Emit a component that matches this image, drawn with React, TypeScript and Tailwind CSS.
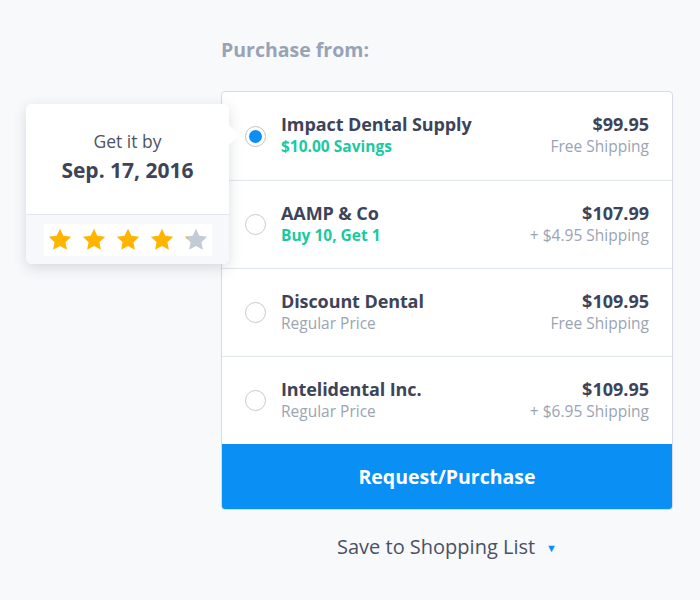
import React from "react";

type Row = { name: string; sub: string; subGreen: boolean; price: string; ship: string; selected?: boolean };

const rows: Row[] = [
  { name: "Impact Dental Supply", sub: "$10.00 Savings", subGreen: true, price: "$99.95", ship: "Free Shipping", selected: true },
  { name: "AAMP & Co", sub: "Buy 10, Get 1", subGreen: true, price: "$107.99", ship: "+ $4.95 Shipping" },
  { name: "Discount Dental", sub: "Regular Price", subGreen: false, price: "$109.95", ship: "Free Shipping" },
  { name: "Intelidental Inc.", sub: "Regular Price", subGreen: false, price: "$109.95", ship: "+ $6.95 Shipping" },
];

const STAR = "M12 1.5l3.1 6.6 7.2.9-5.3 5 1.4 7.1L12 17.6l-6.4 3.5 1.4-7.1-5.3-5 7.2-.9z";

function Star({ fill = 1 }: { fill?: number }) {
  const id = `g${Math.round(fill * 100)}`;
  return (
    <svg width="26" height="26" viewBox="0 0 24 24">
      <defs>
        <linearGradient id={id} x1="0" x2="1" y1="0" y2="0">
          <stop offset={fill} stopColor="#ffb400" />
          <stop offset={fill} stopColor="#c3cbd7" />
        </linearGradient>
      </defs>
      <path d={STAR} fill={`url(#${id})`} />
    </svg>
  );
}

export default function App() {
  return (
    <div
      className="relative w-[700px] h-[600px] bg-[#f8f9fb] pl-[221px] pr-[27px] pt-[36px]"
      style={{ fontFamily: '"Open Sans", "Noto Sans", sans-serif' }}
    >
      <div className="text-[19.5px] font-bold text-[#97a3b6] leading-[27px]">Purchase from:</div>
      <div className="mt-[28px] w-[452px] rounded-[4px] border border-[#d5dae3] bg-white overflow-hidden">
        {rows.map((r, i) => (
          <div
            key={i}
            className={`flex items-center h-[88px] pl-[23px] pr-[23px] ${i > 0 ? "border-t border-[#e2e6ed]" : ""}`}
          >
            <div
              className={`w-[21px] h-[21px] rounded-full border-[1.5px] flex items-center justify-center ${
                r.selected ? "border-[#b9c2cf]" : "border-[#c3cad5]"
              }`}
            >
              {r.selected && <div className="w-[13px] h-[13px] rounded-full bg-[#0b8ff6]" />}
            </div>
            <div className="ml-[15px] flex flex-col mb-[2px]">
              <div className="text-[18px] font-bold text-[#3d4459] leading-[22px] tracking-[-0.1px]">{r.name}</div>
              <div
                className={`text-[15.5px] leading-[22px] ${
                  r.subGreen ? "font-bold text-[#1bc9a0]" : "text-[#9aa4b3]"
                }`}
              >
                {r.sub}
              </div>
            </div>
            <div className="ml-auto flex flex-col items-end mb-[2px]">
              <div className="text-[18px] font-bold text-[#3d4459] leading-[22px]">{r.price}</div>
              <div className="text-[15.5px] text-[#9aa4b3] leading-[22px]">{r.ship}</div>
            </div>
          </div>
        ))}
        <div className="h-[65px] bg-[#0a8ff5] flex items-center justify-center text-white text-[19.5px] font-bold">
          Request/Purchase
        </div>
      </div>
      <div className="mt-[22px] w-[452px] flex items-center justify-center gap-[11px] text-[20px] text-[#4a5164]">
        <span>Save to Shopping List</span>
        <span className="text-[#0a8ff5] text-[11px] mt-[2px]">▼</span>
      </div>

      <div className="absolute left-[26px] top-[104px] w-[203px] rounded-[6px] bg-white shadow-[0_4px_14px_rgba(40,50,70,0.16)]">
        <div className="absolute right-[-7px] top-[24px] w-[14px] h-[14px] bg-white rotate-45" />
        <div className="relative h-[110px] flex flex-col items-center pt-[26px] rounded-t-[6px] bg-white">
          <div className="text-[17.5px] text-[#4d5466] leading-[22px]">Get it by</div>
          <div className="text-[21px] font-bold text-[#3d4459] leading-[28px] mt-[4px]">Sep. 17, 2016</div>
        </div>
        <div className="h-[50px] border-t border-[#e2e6ed] bg-[#f7f8fb] rounded-b-[6px] flex items-center justify-center">
          <div className="flex items-center gap-[8px] bg-white px-[3px] py-[3px]">
            <Star />
            <Star />
            <Star />
            <Star />
            <Star fill={0.12} />
          </div>
        </div>
      </div>
    </div>
  );
}
